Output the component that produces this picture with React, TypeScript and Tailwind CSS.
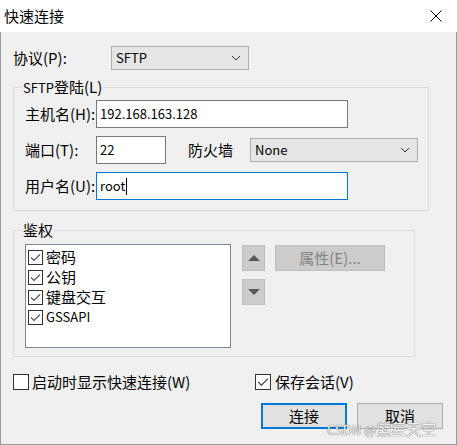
import React from 'react';

const Check: React.FC<{ checked?: boolean; size?: number }> = ({ checked = true, size = 15 }) => (
  <span
    className="flex shrink-0 items-center justify-center border border-[#333333] bg-white"
    style={{ width: size, height: size }}
  >
    {checked && (
      <svg width={size - 2} height={size - 2} viewBox="0 0 13 13">
        <polyline points="2,6.5 5,9.5 11,3.5" fill="none" stroke="#555555" strokeWidth="1.2" />
      </svg>
    )}
  </span>
);

const Chevron: React.FC = () => (
  <svg width="10" height="6" viewBox="0 0 10 6" className="shrink-0">
    <polyline points="1,1 5,5 9,1" fill="none" stroke="#333333" strokeWidth="1" />
  </svg>
);

const Combo: React.FC<{ value: string; width: string }> = ({ value, width }) => (
  <div className={`flex h-[24px] ${width} items-center justify-between border border-[#adadad] bg-[#e5e5e5] pl-[4px] pr-[7px]`}>
    <span className="text-[13px]">{value}</span>
    <Chevron />
  </div>
);

const GroupBox: React.FC<{ title: React.ReactNode; className: string; children: React.ReactNode }> = ({ title, className, children }) => (
  <div className={`relative border border-[#dcdcdc] ${className}`}>
    <span className="absolute left-[8px] top-[-11px] bg-[#f0f0f0] px-[1px] leading-[20px]">{title}</span>
    {children}
  </div>
);

// latin-only entries render a bit smaller than the CJK labels
const authItems = [
  { label: '密码', latin: false },
  { label: '公钥', latin: false },
  { label: '键盘交互', latin: false },
  { label: 'GSSAPI', latin: true },
];

export default function App() {
  return (
    <div className="relative h-[445px] w-[457px] font-['Noto_Sans_CJK_SC',sans-serif] text-[15px] leading-[20px] text-black">
      {/* title bar */}
      <div className="flex h-[32px] items-center justify-between bg-white pl-[4px] pr-[15px]">
        <span>快速连接</span>
        <svg width="12" height="12" viewBox="0 0 12 12">
          <path d="M0.5 0.5 L11.5 11.5 M11.5 0.5 L0.5 11.5" stroke="#000" strokeWidth="1" />
        </svg>
      </div>

      <div className="flex h-[413px] flex-col border-x border-b border-[#9a9a9a] bg-[#f0f0f0] px-[12px] pt-[14px]">
        {/* protocol */}
        <div className="flex items-center">
          <span className="w-[98px]">协议(P):</span>
          <Combo value="SFTP" width="w-[138px]" />
        </div>

        <GroupBox
          title={<><span className="text-[13px]">SFTP</span>登陆(L)</>}
          className="mt-[17px] w-[416px] pb-[10px] pl-[11px] pt-[12px]"
        >
          <div className="flex flex-col gap-[8px]">
            <div className="flex h-[28px] items-center">
              <span className="w-[71px]">主机名(H):</span>
              <div className="flex h-[28px] w-[252px] items-center border border-[#7a7a7a] bg-white pl-[3px] text-[13px]">192.168.163.128</div>
            </div>
            <div className="flex h-[28px] items-center">
              <span className="w-[71px]">端口(T):</span>
              <div className="flex h-[28px] w-[70px] items-center border border-[#7a7a7a] bg-white pl-[3px] text-[13px]">22</div>
              <span className="ml-[22px] w-[62px]">防火墙</span>
              <Combo value="None" width="w-[168px]" />
            </div>
            <div className="flex h-[28px] items-center">
              <span className="w-[71px]">用户名(U):</span>
              <div className="flex h-[28px] w-[252px] items-center border border-[#0078d7] bg-white pl-[3px] text-[13px]">
                root<span className="ml-[1px] h-[17px] w-[1px] bg-black" />
              </div>
            </div>
          </div>
        </GroupBox>

        <GroupBox title="鉴权" className="mt-[19px] w-[402px] pb-[8px] pl-[11px] pt-[13px]">
          <div className="flex items-start">
            <div className="flex h-[104px] w-[206px] flex-col border border-[#828790] bg-white pl-[2px] pt-[2px]">
              {authItems.map((item) => (
                <div key={item.label} className="flex h-[20px] items-center gap-[3px]">
                  <Check />
                  <span className={item.latin ? 'text-[13px]' : ''}>{item.label}</span>
                </div>
              ))}
            </div>
            <div className="ml-[11px] mt-[1px] flex flex-col gap-[8px]">
              <div className="flex h-[26px] w-[23px] items-center justify-center border border-[#bfbfbf] bg-[#cccccc]">
                <svg width="12" height="6" viewBox="0 0 12 6">
                  <polygon points="0,6 6,0 12,6" fill="#595959" />
                </svg>
              </div>
              <div className="flex h-[26px] w-[23px] items-center justify-center border border-[#bfbfbf] bg-[#cccccc]">
                <svg width="12" height="6" viewBox="0 0 12 6">
                  <polygon points="0,0 12,0 6,6" fill="#595959" />
                </svg>
              </div>
            </div>
            <div className="ml-[10px] mt-[1px] flex h-[26px] w-[110px] items-center justify-center border border-[#bfbfbf] bg-[#cccccc] text-[#838383]">
              属性(E)...
            </div>
          </div>
        </GroupBox>

        {/* options */}
        <div className="mt-[15px] flex h-[20px] items-center">
          <div className="flex w-[242px] items-center gap-[3px]">
            <Check checked={false} size={16} />
            <span>启动时显示快速连接(W)</span>
          </div>
          <div className="flex items-center gap-[4px]">
            <Check size={16} />
            <span>保存会话(V)</span>
          </div>
        </div>

        {/* buttons */}
        <div className="mt-[11px] flex justify-end gap-[10px] pr-[1px]">
          <div className="flex h-[26px] w-[86px] items-center justify-center border-2 border-[#0078d7] bg-[#e1e1e1]">连接</div>
          <div className="flex h-[26px] w-[86px] items-center justify-center border border-[#adadad] bg-[#e1e1e1]">取消</div>
        </div>
      </div>

      {/* watermark */}
      <span className="absolute left-[327px] top-[419px] leading-[20px] text-[#f2f2f2] [text-shadow:0_0_1px_#6f6f6f,0_0_1px_#6f6f6f]">
        <span className="text-[13px]">CSDN @</span>紫星天空
      </span>
    </div>
  );
}
